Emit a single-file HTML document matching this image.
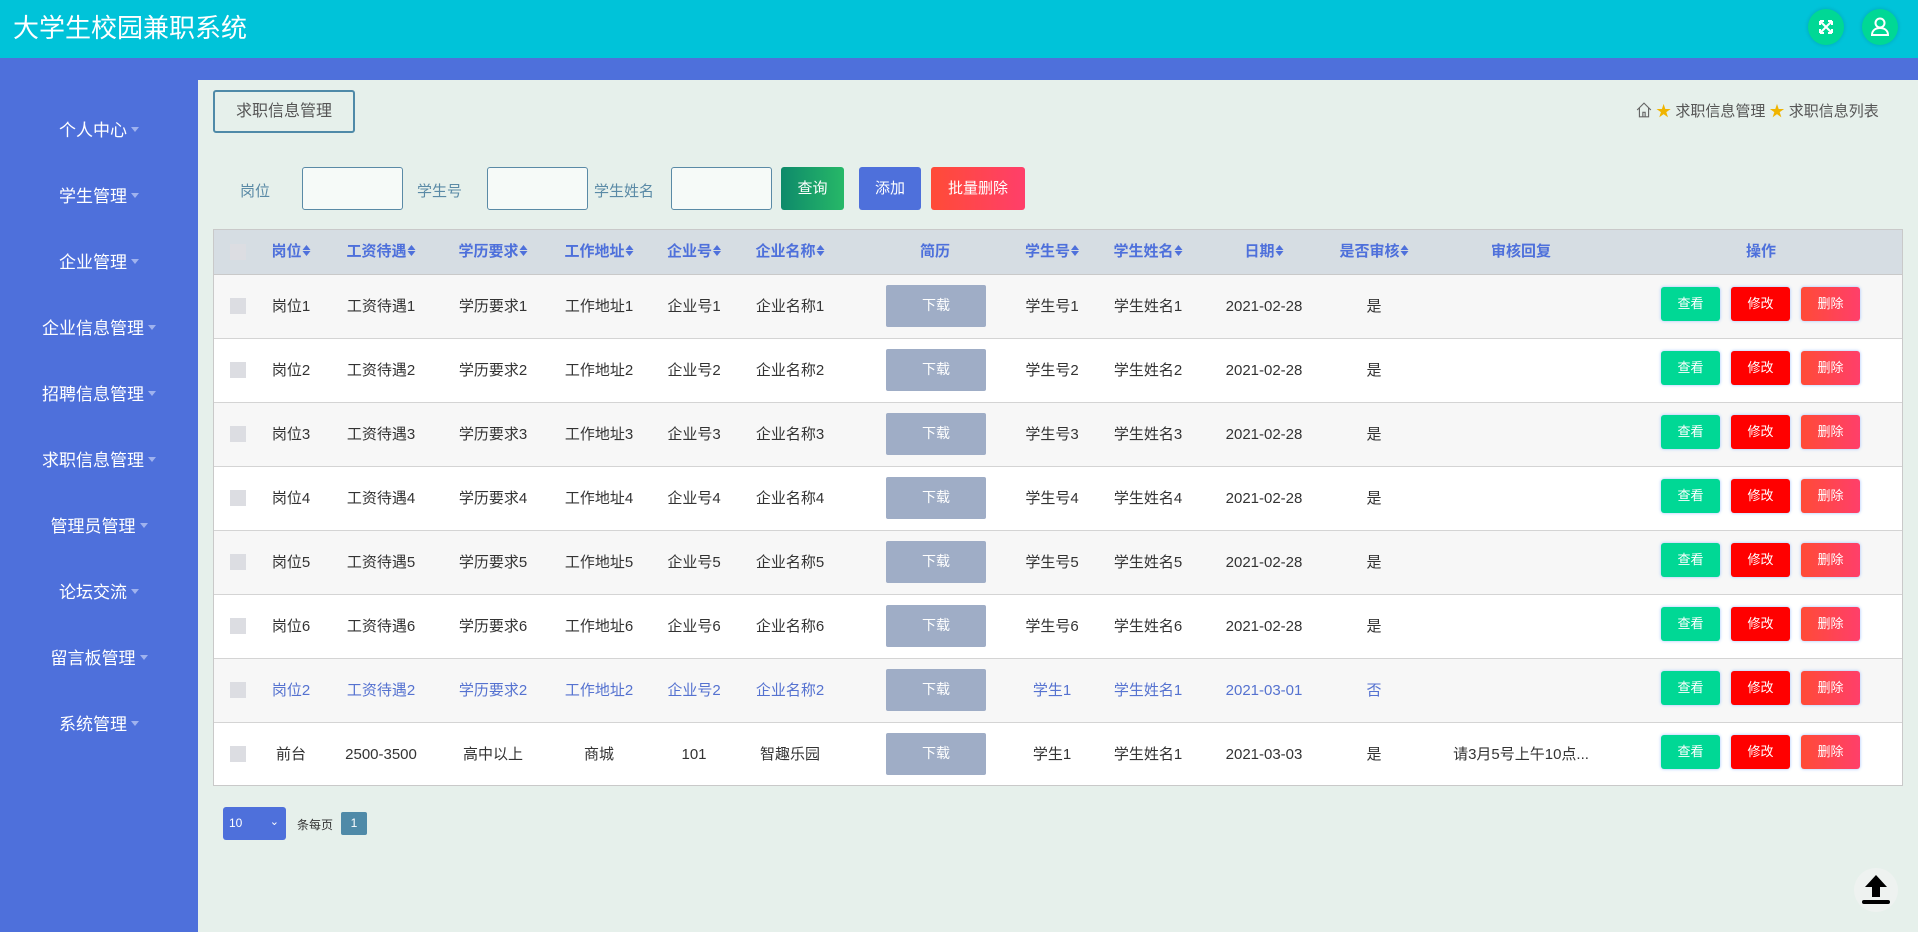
<!DOCTYPE html>
<html><head><meta charset="utf-8">
<style>
*{margin:0;padding:0;box-sizing:border-box}
body{width:1918px;height:932px;overflow:hidden;background:#e6f0eb;font-family:"Liberation Sans","Noto Sans CJK SC",sans-serif;position:relative}
.hd{position:absolute;left:0;top:0;width:1918px;height:58px;background:#00c3d9}
.hd .t{position:absolute;left:13px;top:11px;color:#fff;font-size:26px;line-height:34px}
.ic{position:absolute;top:9px;width:36px;height:36px;border-radius:50%;background:#00d895;box-shadow:0 0 4px rgba(0,0,0,.15)}
.strip{position:absolute;left:0;top:58px;width:1918px;height:22px;background:#4e70db}
.sb{position:absolute;left:0;top:58px;width:198px;height:874px;background:#4e70db}
.sb div{position:absolute;left:0;width:198px;text-align:center;color:#fff;font-size:17px}
.sb div:after{content:"";display:inline-block;margin-left:4px;border:4px solid transparent;border-top:5px solid #9fb2ee;vertical-align:middle}
.bc{position:absolute;left:213px;top:90px;width:142px;height:43px;border:2px solid #4f8aa8;border-radius:3px;font-size:16px;color:#555;text-align:center;line-height:39px}
.crumb{position:absolute;left:1636px;top:102px;font-size:15px;color:#555;line-height:20px}
.lbl{position:absolute;top:180px;font-size:15px;color:#5a8aa6}
.in{position:absolute;top:167px;width:101px;height:43px;border:1px solid #5a8aa6;border-radius:3px;background:#f6faf8}
.btn{position:absolute;top:167px;height:43px;color:#fff;font-size:15px;text-align:center;line-height:43px;border-radius:3px}
.tb{position:absolute;left:213px;top:229px;width:1690px;height:557px;border:1px solid #c9c9c9;background:#fff}
.th{position:absolute;left:0;top:0;width:1688px;height:45px;background:#d6dde3;border-bottom:1px solid #c9c9c9}
.row{position:absolute;left:0;width:1688px;height:64px;border-bottom:1px solid #d4d4d4}
.c{position:absolute;transform:translateX(-50%);white-space:nowrap;font-size:15px;color:#333;line-height:22px;height:22px}
.th .c{top:11px;color:#4e70db;font-weight:bold;font-size:15px}
.s{display:inline-block;width:8px;height:12px;margin-left:1px;vertical-align:-1px;position:relative}
.s:before{content:"";position:absolute;left:0;top:0;border:4px solid transparent;border-bottom:5px solid #4e70db;border-top:0}
.s:after{content:"";position:absolute;left:0;top:6px;border:4px solid transparent;border-top:5px solid #4e70db;border-bottom:0}
.row .c{top:21px}
.blue .c{color:#5572d0}
.cb{position:absolute;left:16px;width:16px;height:16px;background:#dcdde2}
.row .cb{top:23px}
.dl{position:absolute;left:672px;top:10px;width:100px;height:42px;background:#9fadc6;color:#fff;border-radius:2px;font-size:14px;text-align:center;line-height:40px}
.b{position:absolute;top:12px;width:59px;height:34px;border-radius:3px;color:#fff;font-size:13px;text-align:center;line-height:34px;box-shadow:0 0 3px #9fc2ff}
.g{left:1447px;background:#00d895}.r{left:1517px;background:#ff0000}.p{left:1587px;background:linear-gradient(90deg,#ff4b37,#ff3f6a)}
</style></head><body>
<div class="hd"><div class="t">大学生校园兼职系统</div>
<div class="ic" style="left:1808px"><svg width="36" height="36" viewBox="0 0 36 36" fill="none" stroke="#fff" stroke-width="2"><path d="M12 12l12 12M24 12L12 24M12 12h4M12 12v4M24 12h-4M24 12v4M12 24h4M12 24v-4M24 24h-4M24 24v-4"/></svg></div>
<div class="ic" style="left:1862px"><svg width="36" height="36" viewBox="0 0 36 36" fill="none" stroke="#fff" stroke-width="2"><circle cx="18" cy="14" r="4.5"/><path d="M10 26c0-5 4-7 8-7s8 2 8 7z"/></svg></div>
</div>
<div class="strip"></div>
<div class="sb">
<div style="top:58px">个人中心</div><div style="top:124px">学生管理</div><div style="top:190px">企业管理</div><div style="top:256px">企业信息管理</div><div style="top:322px">招聘信息管理</div><div style="top:388px">求职信息管理</div><div style="top:454px">管理员管理</div><div style="top:520px">论坛交流</div><div style="top:586px">留言板管理</div><div style="top:652px">系统管理</div>
</div>
<div class="bc">求职信息管理</div>
<div class="crumb"><svg width="16" height="16" viewBox="0 0 14 14" fill="none" stroke="#666" style="vertical-align:-2px"><path d="M1 7L7 1l6 6M3 5v8h8V5M6 13V9h2v4"/></svg> <span style="color:#f0b400">★</span> 求职信息管理 <span style="color:#f0b400">★</span> 求职信息列表</div>
<div class="lbl" style="left:240px">岗位</div><div class="in" style="left:302px"></div>
<div class="lbl" style="left:417px">学生号</div><div class="in" style="left:487px"></div>
<div class="lbl" style="left:594px">学生姓名</div><div class="in" style="left:671px"></div>
<div class="btn" style="left:781px;width:63px;background:linear-gradient(90deg,#0e8a6a,#27b868)">查询</div>
<div class="btn" style="left:859px;width:62px;background:#4e70db">添加</div>
<div class="btn" style="left:931px;width:94px;background:linear-gradient(90deg,#ff4b37,#ff3f6a)">批量删除</div>
<div class="tb">
<div class="th"><div class="cb" style="top:14px"></div>
<span class="c" style="left:77px">岗位<i class="s"></i></span><span class="c" style="left:167px">工资待遇<i class="s"></i></span><span class="c" style="left:279px">学历要求<i class="s"></i></span><span class="c" style="left:385px">工作地址<i class="s"></i></span><span class="c" style="left:480px">企业号<i class="s"></i></span><span class="c" style="left:576px">企业名称<i class="s"></i></span><span class="c" style="left:721px">简历</span><span class="c" style="left:838px">学生号<i class="s"></i></span><span class="c" style="left:934px">学生姓名<i class="s"></i></span><span class="c" style="left:1050px">日期<i class="s"></i></span><span class="c" style="left:1160px">是否审核<i class="s"></i></span><span class="c" style="left:1307px">审核回复</span><span class="c" style="left:1547px">操作</span></div>
<div class="row" style="top:45px;background:#f7f7f7"><div class="cb"></div><span class="c" style="left:77px">岗位1</span><span class="c" style="left:167px">工资待遇1</span><span class="c" style="left:279px">学历要求1</span><span class="c" style="left:385px">工作地址1</span><span class="c" style="left:480px">企业号1</span><span class="c" style="left:576px">企业名称1</span><div class="dl">下载</div><span class="c" style="left:838px">学生号1</span><span class="c" style="left:934px">学生姓名1</span><span class="c" style="left:1050px">2021-02-28</span><span class="c" style="left:1160px">是</span><div class="b g">查看</div><div class="b r">修改</div><div class="b p">删除</div></div>
<div class="row" style="top:109px"><div class="cb"></div><span class="c" style="left:77px">岗位2</span><span class="c" style="left:167px">工资待遇2</span><span class="c" style="left:279px">学历要求2</span><span class="c" style="left:385px">工作地址2</span><span class="c" style="left:480px">企业号2</span><span class="c" style="left:576px">企业名称2</span><div class="dl">下载</div><span class="c" style="left:838px">学生号2</span><span class="c" style="left:934px">学生姓名2</span><span class="c" style="left:1050px">2021-02-28</span><span class="c" style="left:1160px">是</span><div class="b g">查看</div><div class="b r">修改</div><div class="b p">删除</div></div>
<div class="row" style="top:173px;background:#f7f7f7"><div class="cb"></div><span class="c" style="left:77px">岗位3</span><span class="c" style="left:167px">工资待遇3</span><span class="c" style="left:279px">学历要求3</span><span class="c" style="left:385px">工作地址3</span><span class="c" style="left:480px">企业号3</span><span class="c" style="left:576px">企业名称3</span><div class="dl">下载</div><span class="c" style="left:838px">学生号3</span><span class="c" style="left:934px">学生姓名3</span><span class="c" style="left:1050px">2021-02-28</span><span class="c" style="left:1160px">是</span><div class="b g">查看</div><div class="b r">修改</div><div class="b p">删除</div></div>
<div class="row" style="top:237px"><div class="cb"></div><span class="c" style="left:77px">岗位4</span><span class="c" style="left:167px">工资待遇4</span><span class="c" style="left:279px">学历要求4</span><span class="c" style="left:385px">工作地址4</span><span class="c" style="left:480px">企业号4</span><span class="c" style="left:576px">企业名称4</span><div class="dl">下载</div><span class="c" style="left:838px">学生号4</span><span class="c" style="left:934px">学生姓名4</span><span class="c" style="left:1050px">2021-02-28</span><span class="c" style="left:1160px">是</span><div class="b g">查看</div><div class="b r">修改</div><div class="b p">删除</div></div>
<div class="row" style="top:301px;background:#f7f7f7"><div class="cb"></div><span class="c" style="left:77px">岗位5</span><span class="c" style="left:167px">工资待遇5</span><span class="c" style="left:279px">学历要求5</span><span class="c" style="left:385px">工作地址5</span><span class="c" style="left:480px">企业号5</span><span class="c" style="left:576px">企业名称5</span><div class="dl">下载</div><span class="c" style="left:838px">学生号5</span><span class="c" style="left:934px">学生姓名5</span><span class="c" style="left:1050px">2021-02-28</span><span class="c" style="left:1160px">是</span><div class="b g">查看</div><div class="b r">修改</div><div class="b p">删除</div></div>
<div class="row" style="top:365px"><div class="cb"></div><span class="c" style="left:77px">岗位6</span><span class="c" style="left:167px">工资待遇6</span><span class="c" style="left:279px">学历要求6</span><span class="c" style="left:385px">工作地址6</span><span class="c" style="left:480px">企业号6</span><span class="c" style="left:576px">企业名称6</span><div class="dl">下载</div><span class="c" style="left:838px">学生号6</span><span class="c" style="left:934px">学生姓名6</span><span class="c" style="left:1050px">2021-02-28</span><span class="c" style="left:1160px">是</span><div class="b g">查看</div><div class="b r">修改</div><div class="b p">删除</div></div>
<div class="row blue" style="top:429px;background:#f7f7f7"><div class="cb"></div><span class="c" style="left:77px">岗位2</span><span class="c" style="left:167px">工资待遇2</span><span class="c" style="left:279px">学历要求2</span><span class="c" style="left:385px">工作地址2</span><span class="c" style="left:480px">企业号2</span><span class="c" style="left:576px">企业名称2</span><div class="dl">下载</div><span class="c" style="left:838px">学生1</span><span class="c" style="left:934px">学生姓名1</span><span class="c" style="left:1050px">2021-03-01</span><span class="c" style="left:1160px">否</span><div class="b g">查看</div><div class="b r">修改</div><div class="b p">删除</div></div>
<div class="row" style="top:493px;border-bottom:none"><div class="cb"></div><span class="c" style="left:77px">前台</span><span class="c" style="left:167px">2500-3500</span><span class="c" style="left:279px">高中以上</span><span class="c" style="left:385px">商城</span><span class="c" style="left:480px">101</span><span class="c" style="left:576px">智趣乐园</span><div class="dl">下载</div><span class="c" style="left:838px">学生1</span><span class="c" style="left:934px">学生姓名1</span><span class="c" style="left:1050px">2021-03-03</span><span class="c" style="left:1160px">是</span><span class="c" style="left:1307px">请3月5号上午10点...</span><div class="b g">查看</div><div class="b r">修改</div><div class="b p">删除</div></div>
</div>
<div style="position:absolute;left:223px;top:807px;width:63px;height:33px;background:#4e70db;border-radius:3px;color:#fff;font-size:12px;line-height:33px;padding-left:6px">10<span style="position:absolute;right:7px;top:-1px;font-size:11px">⌄</span></div>
<div style="position:absolute;left:297px;top:816px;font-size:12px;color:#333">条每页</div>
<div style="position:absolute;left:341px;top:812px;width:26px;height:23px;background:#4f8aa8;border-radius:2px;color:#fff;font-size:12px;text-align:center;line-height:23px">1</div>
<div style="position:absolute;left:1854px;top:868px;width:44px;height:44px;border-radius:50%;background:#eef2f0"><svg width="44" height="44" viewBox="0 0 44 44"><path d="M22 7L11 19h7v10h8V19h7z" fill="#000"/><rect x="8" y="32" width="28" height="4" rx="2" fill="#000"/></svg></div>
</body></html>
